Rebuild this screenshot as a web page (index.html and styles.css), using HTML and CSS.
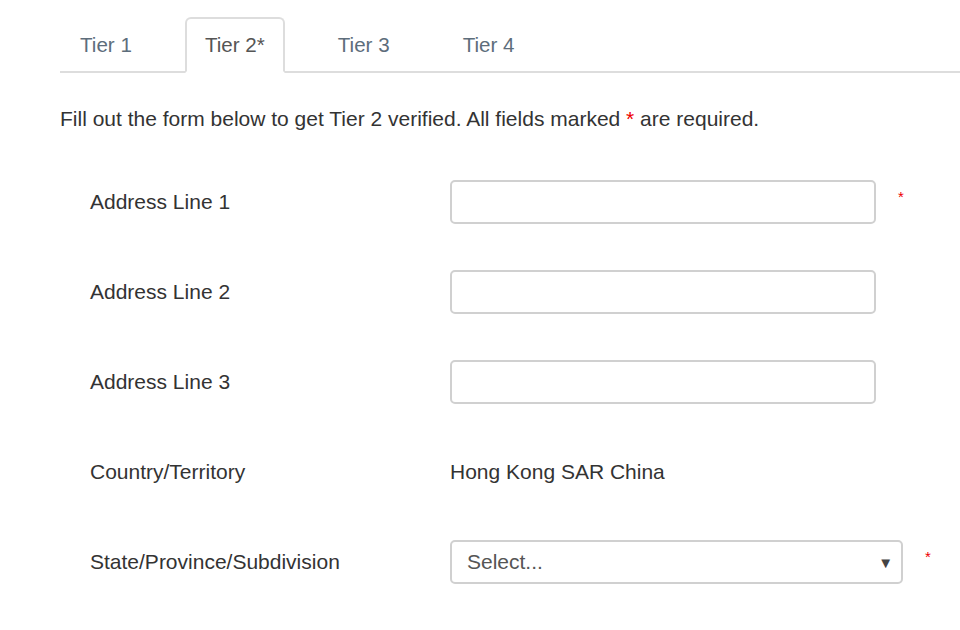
FILE: index.html
```html
<!DOCTYPE html>
<html>
<head>
<meta charset="utf-8">
<link rel="stylesheet" href="styles.css">
</head>
<body>
<div class="page">
  <ul class="tabs">
    <li class="tab">Tier 1</li>
    <li class="tab active">Tier 2*</li>
    <li class="tab">Tier 3</li>
    <li class="tab">Tier 4</li>
  </ul>
  <p class="intro">Fill out the form below to get Tier 2 verified. All fields marked <span class="req">*</span> are required.</p>
  <form class="form">
    <div class="row">
      <label class="label">Address Line 1</label>
      <div class="field"><input class="input" type="text"></div>
      <span class="req mark">*</span>
    </div>
    <div class="row">
      <label class="label">Address Line 2</label>
      <div class="field"><input class="input" type="text"></div>
    </div>
    <div class="row">
      <label class="label">Address Line 3</label>
      <div class="field"><input class="input" type="text"></div>
    </div>
    <div class="row">
      <label class="label">Country/Territory</label>
      <div class="static">Hong Kong SAR China</div>
    </div>
    <div class="row">
      <label class="label">State/Province/Subdivision</label>
      <div class="field wide">
        <div class="select"><span>Select...</span><span class="arrow">▼</span></div>
      </div>
      <span class="req mark">*</span>
    </div>
  </form>
</div>
</body>
</html>
```
FILE: styles.css
```css
* { box-sizing: border-box; }
html, body { margin: 0; padding: 0; background: #fff; }
body {
  font-family: "Liberation Sans", Arial, sans-serif;
  font-size: 21px;
  color: #333;
}
.page { padding: 17px 0 0 60px; }
.tabs {
  list-style: none;
  margin: 0;
  padding: 0;
  display: flex;
  border-bottom: 2px solid #ddd;
}
.tab {
  height: 56px;
  margin-bottom: -2px;
  padding: 0 18px;
  margin-right: 33px;
  display: flex;
  align-items: center;
  font-size: 20.6px;
  color: #5d6d7b;
  border: 2px solid transparent;
  border-radius: 6px 6px 0 0;
}
.tab.active {
  color: #555;
  border-color: #ddd;
  border-bottom-color: #fff;
  background: #fff;
}
.intro { margin: 34px 0 0; line-height: 24px; }
.req { color: #e00; }
.form { margin-top: 49px; padding-left: 30px; }
.row {
  display: flex;
  align-items: center;
  height: 44px;
  margin-bottom: 46px;
}
.label { width: 360px; flex: none; }
.field { width: 426px; flex: none; }
.field.wide { width: 453px; }
.input {
  display: block;
  width: 100%;
  height: 44px;
  border: 2px solid #d0d0d0;
  border-radius: 5px;
  background: #fff;
  font: inherit;
  outline: none;
}
.static { color: #333; }
.mark {
  margin-left: 22px;
  font-size: 15px;
  align-self: flex-start;
  margin-top: 8px;
}
.select {
  height: 44px;
  border: 2px solid #d0d0d0;
  border-radius: 5px;
  display: flex;
  align-items: center;
  justify-content: space-between;
  padding: 0 8px 0 15px;
  color: #555;
}
.arrow { font-size: 15px; color: #444; }
```
